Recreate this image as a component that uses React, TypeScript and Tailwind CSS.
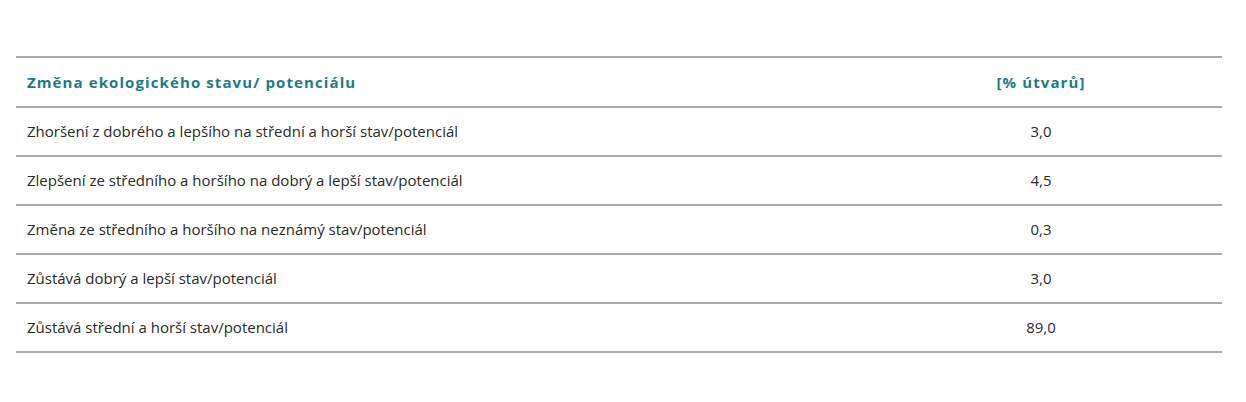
import React from "react";

const rows: [string, string][] = [
  ["Zhoršení z dobrého a lepšího na střední a horší stav/potenciál", "3,0"],
  ["Zlepšení ze středního a horšího na dobrý a lepší stav/potenciál", "4,5"],
  ["Změna ze středního a horšího na neznámý stav/potenciál", "0,3"],
  ["Zůstává dobrý a lepší stav/potenciál", "3,0"],
  ["Zůstává střední a horší stav/potenciál", "89,0"],
];

export default function App() {
  return (
    <div className="w-[1246px] h-[402px] bg-white pt-[56px] pl-[16px] pr-[24px]" style={{ fontFamily: '"Open Sans", sans-serif' }}>
      <div className="border-t-2 border-[#ababab]">
        <div className="grid grid-cols-[1fr_362px] items-center h-[50px] border-b-2 border-[#ababab] text-[#1d7a89] font-bold text-[15px] tracking-[1.1px]">
          <div className="pl-[11px]">Změna ekologického stavu/ potenciálu</div>
          <div className="text-center">[% útvarů]</div>
        </div>
        {rows.map(([a, b], i) => (
          <div key={i} className="grid grid-cols-[1fr_362px] items-center h-[49px] border-b-2 border-[#ababab] text-[#2a2a2a] text-[15px]">
            <div className="pl-[11px]">{a}</div>
            <div className="text-center">{b}</div>
          </div>
        ))}
      </div>
    </div>
  );
}
